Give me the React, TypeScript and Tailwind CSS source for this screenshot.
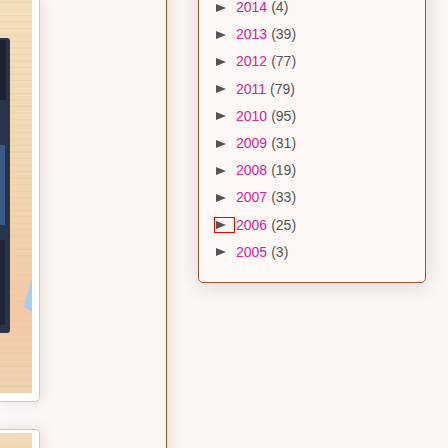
import React from "react";

const years: [string, number][] = [
  ["2014", 4],
  ["2013", 39],
  ["2012", 77],
  ["2011", 79],
  ["2010", 95],
  ["2009", 31],
  ["2008", 19],
  ["2007", 33],
  ["2006", 25],
  ["2005", 3],
];

const Arrow = () => (
  <svg width="10" height="10" viewBox="0 0 10 10" className="shrink-0">
    <polygon points="0,1 10,5 0,9" fill="#555555" />
  </svg>
);

const Photo = ({ device }: { device?: boolean }) => (
  <svg width="32" height="100%" viewBox="0 0 32 393" preserveAspectRatio="none" className="block h-full">
    <defs>
      <linearGradient id="wood" x1="0" y1="0" x2="0" y2="1">
        <stop offset="0" stopColor="#f3e0bd" />
        <stop offset="0.5" stopColor="#f1d5b0" />
        <stop offset="0.8" stopColor="#f2c9a6" />
        <stop offset="1" stopColor="#efd3b0" />
      </linearGradient>
    </defs>
    <rect width="32" height="393" fill="url(#wood)" />
    {Array.from({ length: 60 }).map((_, i) => (
      <rect key={i} x="0" y={i * 6.5 + 2} width="32" height="1" fill="#e6c79c" opacity="0.35" />
    ))}
    {device && (
      <g>
        <rect x="-8" y="38" width="18" height="295" rx="3" fill="#27344a" />
        <rect x="-8" y="40" width="14" height="60" fill="#1c2230" />
        <rect x="-8" y="145" width="13" height="80" fill="#3b5a8a" />
        <rect x="-8" y="240" width="13" height="85" fill="#1e2636" />
        <polygon points="32,278 24,306 32,313" fill="#a8cdf0" />
      </g>
    )}
  </svg>
);

export default function App() {
  return (
    <div className="w-[448px] h-[448px] overflow-hidden flex bg-[#fcf6f5] font-['Liberation_Sans',Arial,sans-serif]">
      <div className="w-[40px] shrink-0 flex flex-col gap-[27px] relative z-10">
        <div className="bg-white border-r border-b border-[#cbc7c7] rounded-br-[5px] pr-[7px] pb-[8px] shadow-[2px_0_14px_rgba(0,0,0,0.10)]">
          <div className="h-[393px]">
            <Photo device />
          </div>
        </div>
        <div className="bg-white border-r border-t border-[#cbc7c7] rounded-tr-[5px] pr-[7px] pt-[3px] shadow-[2px_0_14px_rgba(0,0,0,0.10)]">
          <div className="h-[60px]">
            <Photo />
          </div>
        </div>
      </div>
      <div className="w-[126px] shrink-0" />
      <div className="flex-1 border-l border-[#a0562c] pl-[31px] shadow-[inset_16px_0_14px_-12px_rgba(0,0,0,0.10)]">
        <div className="w-[228px] mt-[-23px] border border-[#a0562c] rounded-[5px] bg-[#fdf7f6] py-4 shadow-[0_4px_22px_rgba(0,0,0,0.13)]">
          {years.map(([y, n]) => (
            <div key={y} className="h-[27.2px] flex items-center pl-[17px] text-[14px] relative">
              <Arrow />
              <span className="ml-[10px] text-[#d3259b]">{y}</span>
              <span className="ml-[4px] text-[#555555]">({n})</span>
              {y === "2006" && (
                <span className="absolute left-[15px] top-[5px] w-[21px] h-[16px] border border-[#ee0000]" />
              )}
            </div>
          ))}
        </div>
      </div>
    </div>
  );
}
